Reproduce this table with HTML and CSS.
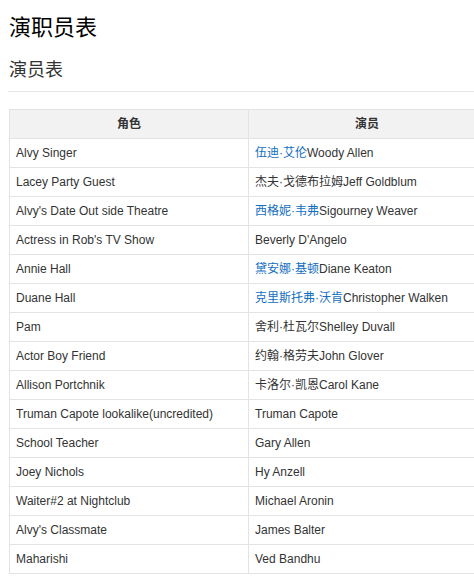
FILE: index.html
```html
<!DOCTYPE html>
<html lang="zh">
<head>
<meta charset="utf-8">
<title>演职员表</title>
<link rel="stylesheet" href="styles.css">
</head>
<body>
<div class="page">
  <h1 class="title">演职员表</h1>
  <h2 class="subtitle">演员表</h2>
  <table class="cast">
    <colgroup><col class="c1"><col class="c2"></colgroup>
    <thead>
      <tr><th>角色</th><th>演员</th></tr>
    </thead>
    <tbody>
      <tr><td>Alvy Singer</td><td><a href="#">伍迪·艾伦</a>Woody Allen</td></tr>
      <tr><td>Lacey Party Guest</td><td>杰夫·戈德布拉姆Jeff Goldblum</td></tr>
      <tr><td>Alvy's Date Out side Theatre</td><td><a href="#">西格妮·韦弗</a>Sigourney Weaver</td></tr>
      <tr><td>Actress in Rob's TV Show</td><td>Beverly D'Angelo</td></tr>
      <tr><td>Annie Hall</td><td><a href="#">黛安娜·基顿</a>Diane Keaton</td></tr>
      <tr><td>Duane Hall</td><td><a href="#">克里斯托弗·沃肯</a>Christopher Walken</td></tr>
      <tr><td>Pam</td><td>舍利·杜瓦尔Shelley Duvall</td></tr>
      <tr><td>Actor Boy Friend</td><td>约翰·格劳夫John Glover</td></tr>
      <tr><td>Allison Portchnik</td><td>卡洛尔·凯恩Carol Kane</td></tr>
      <tr><td>Truman Capote lookalike(uncredited)</td><td>Truman Capote</td></tr>
      <tr><td>School Teacher</td><td>Gary Allen</td></tr>
      <tr><td>Joey Nichols</td><td>Hy Anzell</td></tr>
      <tr><td>Waiter#2 at Nightclub</td><td>Michael Aronin</td></tr>
      <tr><td>Alvy's Classmate</td><td>James Balter</td></tr>
      <tr><td>Maharishi</td><td>Ved Bandhu</td></tr>
    </tbody>
  </table>
</div>
</body>
</html>
```
FILE: styles.css
```css
html, body {
  margin: 0;
  padding: 0;
  overflow: hidden;
  background: #fff;
}
body {
  font-family: "Liberation Sans", Arial, "Noto Sans CJK SC", sans-serif;
  color: #333;
}
.page {
  padding-left: 9px;
}
.title {
  margin: 0;
  padding-top: 14px;
  font-size: 22px;
  line-height: 28px;
  font-weight: normal;
  color: #000;
}
.subtitle {
  margin: 16px 0 0 -1px;
  padding: 0 0 9px 1px;
  font-size: 18px;
  line-height: 24px;
  font-weight: normal;
  color: #333;
  border-bottom: 1px solid #e6e6e6;
}
.cast {
  margin-top: 17px;
  border-collapse: collapse;
  table-layout: fixed;
  width: 476px;
  font-size: 12px;
}
.cast .c1 { width: 239px; }
.cast .c2 { width: 237px; }
.cast th,
.cast td {
  border: 1px solid #e3e3e3;
  height: 28px;
  padding: 0 0 0 6px;
  line-height: 18px;
  text-align: left;
  white-space: nowrap;
  overflow: hidden;
}
.cast th {
  background: #f2f2f2;
  text-align: center;
  font-weight: bold;
  color: #333;
  padding: 0;
}
.cast a {
  color: #136ec2;
  text-decoration: none;
}
```
